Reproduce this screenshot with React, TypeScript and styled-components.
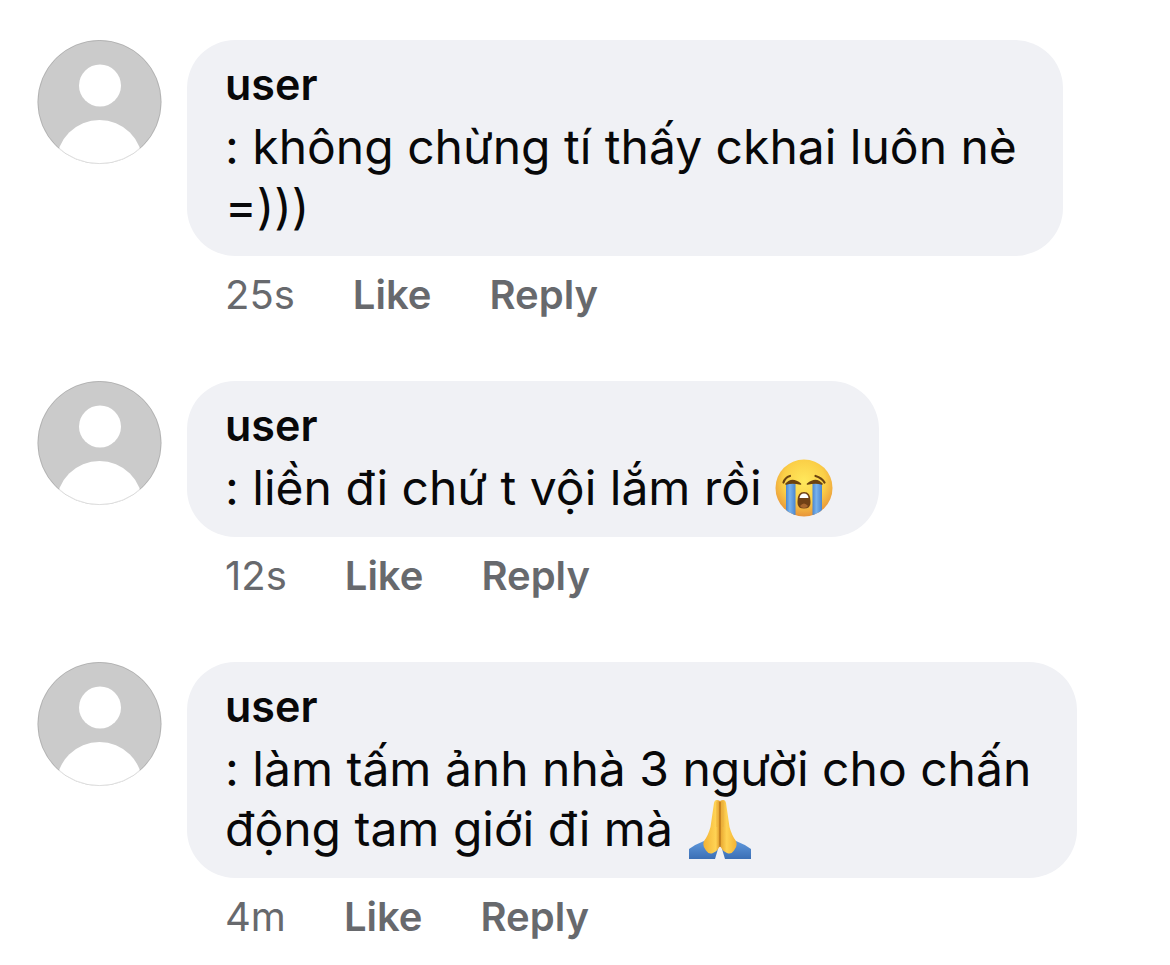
import React from "react";
import styled, { createGlobalStyle } from "styled-components";

const GlobalStyle = createGlobalStyle`
  *, *::before, *::after { box-sizing: border-box; }
  body {
    margin: 0;
    background: #ffffff;
    color: #080809;
    font-family: Inter, "Noto Sans", sans-serif;
  }
`;

const Thread = styled.main`
  display: flex;
  flex-direction: column;
  gap: 48px;
  padding: 40px 40px 0 37px;
`;

const CommentRow = styled.article`
  display: flex;
  align-items: flex-start;
  gap: 25px;
`;

const AvatarArt = styled.svg`
  flex: none;
  width: 125px;
  height: 125px;
`;

const CommentBody = styled.div`
  display: flex;
  flex-direction: column;
  align-items: flex-start;
  min-width: 0;
`;

const Bubble = styled.div`
  padding: 17px 46px 19px 38px;
  border-radius: 48px;
  background: #f0f1f5;
`;

const Author = styled.h2`
  margin: 0;
  font-size: 43px;
  line-height: 54px;
  font-weight: 600;
`;

const Message = styled.p`
  margin: 6px 0 0;
  font-size: 48px;
  line-height: 60px;
`;

const Line = styled.span`
  display: block;
`;

const Actions = styled.footer`
  display: flex;
  align-items: center;
  gap: 58px;
  height: 77px;
  padding-left: 38px;
  color: #67696d;
  font-size: 40px;
  line-height: 48px;
`;

const ActionButton = styled.button`
  padding: 0;
  border: 0;
  background: none;
  color: inherit;
  font: inherit;
  font-weight: 600;
  cursor: pointer;
`;

const Emoji = styled.svg<{ $width: number }>`
  display: inline-block;
  width: ${({ $width }) => $width}px;
  height: 60px;
  vertical-align: bottom;
`;

function Avatar() {
  return (
    <AvatarArt viewBox="0 0 125 125" role="img" aria-label="user">
      <defs>
        <clipPath id="avatar-disc">
          <circle cx="62.5" cy="62" r="62" />
        </clipPath>
      </defs>
      <g clipPath="url(#avatar-disc)">
        <rect width="125" height="125" fill="#cbcbcb" />
        <circle cx="63" cy="45.500" r="21" fill="#fff" />
        <circle cx="62.500" cy="123" r="43" fill="#fff" />
      </g>
      <circle cx="62.5" cy="62" r="61.6" fill="none" stroke="#000" strokeOpacity="0.12" />
    </AvatarArt>
  );
}

function CryingFace() {
  return (
    <Emoji $width={58} viewBox="3 0 58 60" role="img" aria-label="loudly crying face">
      <defs>
        <radialGradient id="cry-skin" cx="50%" cy="38%" r="62%">
          <stop offset="0" stopColor="#ffe85c" />
          <stop offset="0.6" stopColor="#fbcf47" />
          <stop offset="1" stopColor="#e8943a" />
        </radialGradient>
        <linearGradient id="cry-tear" x1="0" x2="1">
          <stop offset="0" stopColor="#4a86d0" />
          <stop offset="0.4" stopColor="#78b2ec" />
          <stop offset="1" stopColor="#4a86d0" />
        </linearGradient>
        <clipPath id="cry-face">
          <circle cx="32" cy="30" r="28.500" />
        </clipPath>
      </defs>
      <circle cx="32" cy="30" r="28.500" fill="url(#cry-skin)" />
      <g clipPath="url(#cry-face)">
        <path d="M14 26Q19 24 23.500 26V60H14Z" fill="url(#cry-tear)" />
        <path d="M40.500 26Q45 24 50 26V60H40.500Z" fill="url(#cry-tear)" />
      </g>
      <path d="M14 26Q20 19 28.500 26Q20 24 14 26Z" fill="#6b4310" stroke="#6b4310" strokeWidth="1.600" strokeLinejoin="round" />
      <path d="M35.500 26Q44 19 50 26Q44 24 35.500 26Z" fill="#6b4310" stroke="#6b4310" strokeWidth="1.600" strokeLinejoin="round" />
      <path d="M11.500 24.500Q13 19.500 18 18M52.500 24.500Q50 20 43.500 18" fill="none" stroke="#6b4310" strokeWidth="2.200" strokeLinecap="round" />
      <path d="M25.500 43Q25.500 34 32 34Q38.500 34 38.500 43V45Q38.500 50.500 32 50.500Q25.500 50.500 25.500 45Z" fill="#704116" />
      <path d="M27.500 40Q28 35.500 32 35.500Q36 35.500 36.500 40Z" fill="#fff" />
      <path d="M28 48Q32 43 36 48Q35 50 32 50Q29 50 28 48Z" fill="#a8662e" />
    </Emoji>
  );
}

function FoldedHands() {
  return (
    <Emoji $width={66} viewBox="-2 0 66 60" role="img" aria-label="folded hands">
      <defs>
        <linearGradient id="hand-left" x1="0" x2="1">
          <stop offset="0" stopColor="#f2b234" />
          <stop offset="0.75" stopColor="#ffd354" />
          <stop offset="1" stopColor="#dd9526" />
        </linearGradient>
        <linearGradient id="hand-right" x1="0" x2="1">
          <stop offset="0" stopColor="#e6a32d" />
          <stop offset="0.4" stopColor="#ffd354" />
          <stop offset="1" stopColor="#f2b234" />
        </linearGradient>
        <linearGradient id="sleeve" x1="0" y1="0" x2="0" y2="1">
          <stop offset="0" stopColor="#5f98dc" />
          <stop offset="1" stopColor="#3b6fb5" />
        </linearGradient>
      </defs>
      <path d="M1 50Q8 45 16 42L30 50L27 60H1Z" fill="url(#sleeve)" />
      <path d="M63 50Q56 45 48 42L34 50L37 60H63Z" fill="url(#sleeve)" />
      <path d="M32 2Q27 -1 26 4L22.500 28Q20 37 16 42Q14 47 18 51.500Q21 56 25 54Q31 51 32 46Z" fill="url(#hand-left)" />
      <path d="M32 2Q37 -1 38 4L41.500 28Q44 37 48 42Q50 47 46 51.500Q43 56 39 54Q33 51 32 46Z" fill="url(#hand-right)" />
      <path d="M32 3V48" stroke="#b9761c" strokeWidth="1.400" />
      <path d="M29 3V28M35 3V28" stroke="#eab03c" strokeWidth="0.700" />
    </Emoji>
  );
}

interface CommentData {
  age: string;
  lines: React.ReactNode[];
}

const comments: CommentData[] = [
  { age: "25s", lines: [": không chừng tí thấy ckhai luôn nè", "=)))"] },
  { age: "12s", lines: [<>: liền đi chứ t vội lắm rồi <CryingFace /></>] },
  {
    age: "4m",
    lines: [
      ": làm tấm ảnh nhà 3 người cho chấn",
      <>động tam giới đi mà <FoldedHands /></>,
    ],
  },
];

function Comment({ age, lines }: CommentData) {
  return (
    <CommentRow>
      <Avatar />
      <CommentBody>
        <Bubble>
          <Author>user</Author>
          <Message>
            {lines.map((line, index) => (
              <Line key={index}>{line}</Line>
            ))}
          </Message>
        </Bubble>
        <Actions>
          <time>{age}</time>
          <ActionButton type="button">Like</ActionButton>
          <ActionButton type="button">Reply</ActionButton>
        </Actions>
      </CommentBody>
    </CommentRow>
  );
}

export default function App() {
  return (
    <>
      <GlobalStyle />
      <Thread>
        {comments.map((comment) => (
          <Comment key={comment.age} {...comment} />
        ))}
      </Thread>
    </>
  );
}
